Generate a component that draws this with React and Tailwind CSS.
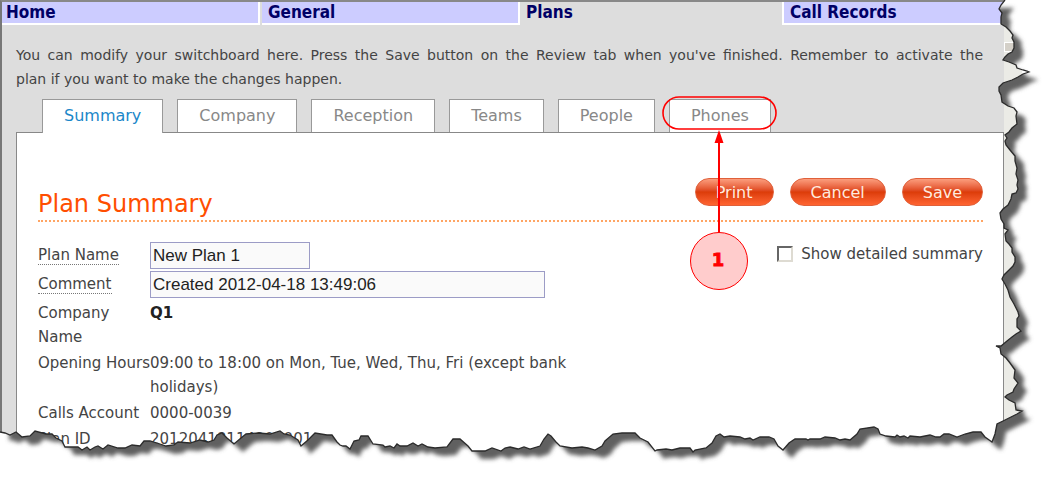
import React, { useState } from 'react'

const NAV = ['Home', 'General', 'Plans', 'Call Records']
const TABS = ['Summary', 'Company', 'Reception', 'Teams', 'People', 'Phones']

// torn paper outline, right side going down and then the bottom going left
const TORN =
  '1005,0 1001,5 999,9 1002,13 1001,17 1001,24 1006,27 1010,31 1013,35 1012,38 1014,42 1014,48 1012,52 1008,54 1005,57 1003,60 ' +
  '1009,62 1016,65 1017,68 1023,70 1027,71 1029,72 1023,74 1018,77 1012,80 1003,83 999,87 999,91 1001,95 1002,102 1008,106 ' +
  '1014,108 1017,112 1016,116 1017,124 1012,128 1009,132 1005,135 1007,138 1005,141 1006,145 1010,150 1015,156 1015,161 1017,168 ' +
  '1016,174 1018,180 1017,185 1018,189 1016,193 1012,194 1011,199 1008,205 1003,209 1000,213 1001,219 1004,224 1004,228 1008,230 ' +
  '1005,234 1006,241 1009,244 1012,248 1012,252 1015,257 1015,262 1013,266 1008,271 1004,275 1002,279 1005,284 1008,290 1010,297 ' +
  '1014,304 1018,312 1019,316 1017,319 1017,327 1021,331 1016,334 1012,337 1007,341 1001,346 996,346 1000,348 1001,354 1006,358 ' +
  '1010,363 1015,370 1014,378 1018,383 1014,389 1013,392 1007,395 1005,397 1009,400 1015,403 1016,410 1022,411 1017,414 1011,417 ' +
  '1003,421 997,424 995,434 992,442'
const TORN_BOTTOM =
  '985,437 981,432 973,432 965,434 957,437 949,434 944,434 940,437 936,437 930,435 920,437 910,436 908,438 904,436 900,437 897,435 ' +
  '895,437 886,436 880,434 878,429 874,427 860,429 857,434 850,440 845,439 840,440 835,438 825,437 820,439 810,439 808,440 806,439 ' +
  '795,439 789,443 783,450 778,446 774,439 769,437 760,437 753,440 750,438 745,439 740,437 730,436 724,437 720,434 716,436 712,443 ' +
  '706,448 695,450 693,452 690,448 680,448 672,450 666,449 657,450 655,451 648,442 640,438 635,433 622,433 613,434 605,441 602,446 ' +
  '595,450 588,448 582,447 572,448 560,446 556,442 551,436 548,434 544,439 540,446 530,449 524,447 518,449 510,447 505,448 501,451 ' +
  '492,448 485,451 472,451 468,446 460,439 453,439 447,447 435,448 428,447 422,444 418,446 413,443 407,446 400,446 397,444 394,448 ' +
  '390,446 385,447 383,445 373,444 368,436 361,436 359,440 354,441 350,449 346,446 343,446 340,445 337,442 332,435 327,435 315,433 ' +
  '308,440 301,446 298,440 290,435 284,434 280,431 270,434 258,433 246,434 241,438 234,444 227,438 222,433 217,435 214,440 208,442 ' +
  '200,440 190,443 178,442 174,445 166,446 160,444 150,441 144,441 140,446 132,445 125,448 118,448 108,445 103,449 98,446 95,447 ' +
  '90,450 87,447 82,450 78,447 65,447 62,441 56,438 52,434 46,434 35,431 30,436 22,437 16,432 10,435 5,433 0,432'

function TornEdge() {
  const edge = `${TORN} ${TORN_BOTTOM}`
  return (
    <svg
      className="absolute inset-0 w-full h-[484px] pointer-events-none"
      viewBox="0 0 1058 484"
      preserveAspectRatio="none"
      aria-hidden="true"
    >
      <defs>
        <clipPath id="outside">
          <polygon points={`${edge} 0,484 1058,484 1058,0`} />
        </clipPath>
        <filter id="soft" x="-5%" y="-5%" width="110%" height="110%">
          <feGaussianBlur stdDeviation="2" />
        </filter>
      </defs>
      <g clipPath="url(#outside)">
        <rect width="1058" height="484" fill="#fff" />
        <polygon points={`${edge} 0,8 0,0`} transform="translate(9 8)" fill="#606060" filter="url(#soft)" />
      </g>
      <polyline points={edge} fill="none" stroke="#2b2b2b" strokeWidth="1.3" />
    </svg>
  )
}

function Callout() {
  return (
    <svg
      className="absolute -left-2.5 -top-1 w-[120px] h-[200px] pointer-events-none"
      viewBox="0 0 120 200"
      aria-hidden="true"
    >
      <rect x="4" y="2" width="113" height="32" rx="16" fill="none" stroke="#f00" strokeWidth="1.6" />
      <path d="M60 44V138" stroke="#f00" strokeWidth="2" />
      <path d="M60 35L64.5 48H55.5Z" fill="#f00" />
      <circle cx="60" cy="166" r="28.5" fill="#fcc" stroke="#f00" />
      <text
        x="59"
        y="171"
        textAnchor="middle"
        fill="#f00"
        stroke="#f00"
        strokeWidth="0.8"
        className="text-[18px] font-bold font-['DejaVu_Sans',sans-serif]"
      >
        1
      </text>
    </svg>
  )
}

function PillButton({ children }) {
  return (
    <button
      type="button"
      className="h-7 px-5 rounded-full text-[16px] leading-7 text-[#ffeadf] bg-linear-to-b from-[#fb9d7d] via-[#dc3c08] via-50% to-[#ff6430] border border-[#e0603a]"
    >
      {children}
    </button>
  )
}

function Row({ label, children }) {
  return (
    <div className="grid grid-cols-[112px_1fr] py-px">
      <dt>{label}</dt>
      <dd className="max-w-[430px]">{children}</dd>
    </div>
  )
}

export default function App() {
  const [name, setName] = useState('New Plan 1')
  const [comment, setComment] = useState('Created 2012-04-18 13:49:06')
  const [detailed, setDetailed] = useState(false)

  const field =
    "h-[27px] px-0.5 border border-[#9c9cc6] bg-[#fafafa] text-[17px] text-[#222] font-['Liberation_Sans',Arial,sans-serif] outline-none"
  const hint = 'leading-[18px] border-b border-dotted border-[#777]'

  return (
    <div className="relative overflow-hidden bg-white text-[15px] leading-6 text-[#444] font-['DejaVu_Sans',Verdana,sans-serif]">
      <div className="flex min-h-[484px] pr-9">
        <div className="flex-1 flex flex-col bg-[#ddd] border-t-2 border-l-2 border-t-[#888] border-l-[#777]">
          <nav className="flex gap-0.5 text-[17px] leading-[21px] font-bold font-['DejaVu_Sans_Condensed','DejaVu_Sans',sans-serif]">
            {NAV.map((item) => (
              <a
                key={item}
                href="#"
                className={`text-[#006] h-[23px] border-b-2 ${
                  item === 'Plans' ? 'border-transparent w-[258px] pl-1' : 'bg-[#ccf] border-white'
                } ${item === 'Home' ? 'w-[258px] pl-1 border-r-2' : ''} ${
                  item === 'General' ? 'w-[258px] pl-1.5 border-r-2' : ''
                } ${item === 'Call Records' ? 'flex-1 pl-1.5 border-l-2' : ''}`}
              >
                {item}
              </a>
            ))}
          </nav>

          <p className="pl-[14px] pr-[21px] pt-[18px] text-[14px] leading-6 text-justify">
            You can modify your switchboard here. Press the Save button on the Review tab when you've finished. Remember
            to activate the plan&nbsp;if&nbsp;you want to make the changes happen.
          </p>

          <div className="flex gap-[14px] pl-10 pt-2 text-[16px] leading-8">
            {TABS.map((tab) => (
              <div key={tab} className={`relative ${tab === 'Phones' ? 'z-10' : ''}`}>
                <a
                  href="#"
                  className={`block px-[21px] bg-white border border-b-0 border-[#999] ${
                    tab === 'Summary' ? 'text-[#1b87c9] -mb-px h-[34px] relative' : 'text-[#888] h-[33px]'
                  }`}
                >
                  {tab}
                </a>
                {tab === 'Phones' && <Callout />}
              </div>
            ))}
          </div>

          <main className="flex-1 ml-[14px] pl-[21px] pr-[20px] pt-[45px] bg-white border border-[#888]">
            <header className="flex justify-between items-start h-11 border-b-2 border-dotted border-[#ffa564]">
              <h1 className="pt-2.5 text-[24px] leading-8 text-[#ff4e00]">Plan Summary</h1>
              <div className="flex gap-4">
                <PillButton>Print</PillButton>
                <PillButton>Cancel</PillButton>
                <PillButton>Save</PillButton>
              </div>
            </header>

            <div className="flex justify-between items-start pt-5">
              <div className="flex-1">
                <div className="grid grid-cols-[112px_1fr] gap-y-0.5 items-center justify-items-start">
                  <label htmlFor="plan-name" className={hint}>
                    Plan Name
                  </label>
                  <input
                    id="plan-name"
                    className={`${field} w-[160px]`}
                    value={name}
                    onChange={(e) => setName(e.target.value)}
                  />
                  <label htmlFor="comment" className={hint}>
                    Comment
                  </label>
                  <input
                    id="comment"
                    className={`${field} w-[395px]`}
                    value={comment}
                    onChange={(e) => setComment(e.target.value)}
                  />
                </div>
                <dl className="pt-0.5">
                  <Row label="Company Name">
                    <b className="text-[#222]">Q1</b>
                  </Row>
                  <Row label={'Opening\u00a0Hours'}>09:00 to 18:00 on Mon, Tue, Wed, Thu, Fri (except bank holidays)</Row>
                  <Row label="Calls Account">0000-0039</Row>
                  <Row label="Plan ID">20120418114900001</Row>
                </dl>
              </div>
              <label className="flex items-center gap-2">
                <input
                  type="checkbox"
                  checked={detailed}
                  onChange={(e) => setDetailed(e.target.checked)}
                  className="appearance-none size-4 bg-white border-2 border-t-[#666] border-l-[#666] border-r-[#dedbd2] border-b-[#dedbd2] checked:bg-[#666]"
                />
                Show detailed summary
              </label>
            </div>
          </main>
        </div>
        {/* scrollbar gutter */}
        <div className="w-[18px] pt-[42px] bg-[#ebebe6]">
          <div className="h-[10px] bg-[#d4d0c8] border border-white" />
        </div>
      </div>
      <TornEdge />
    </div>
  )
}
